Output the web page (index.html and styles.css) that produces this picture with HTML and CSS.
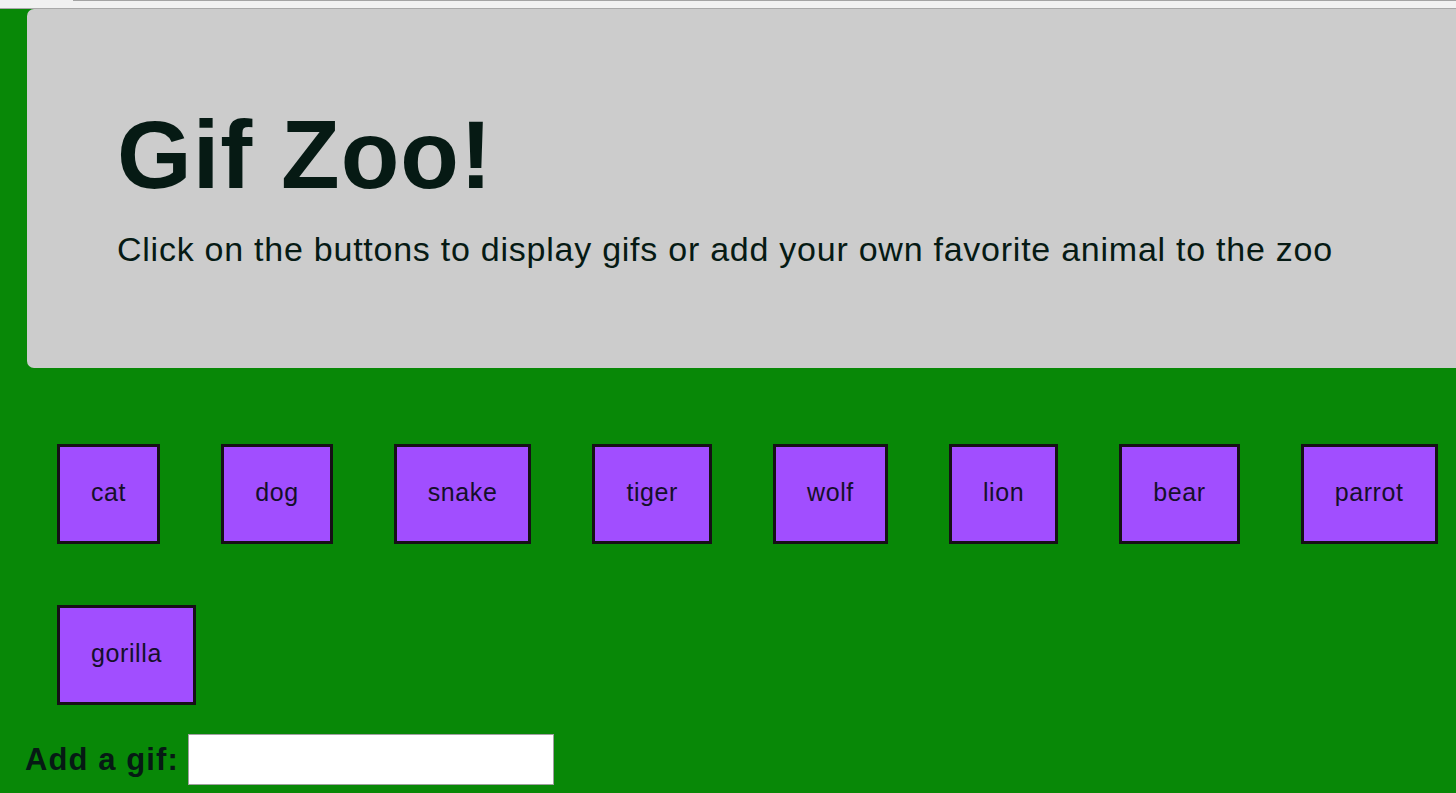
FILE: index.html
```html
<!DOCTYPE html>
<html lang="en">
<head>
<meta charset="utf-8">
<title>Gif Zoo!</title>
<link rel="stylesheet" href="styles.css">
</head>
<body>
<div class="scrollbar"><div class="thumb"></div></div>
<header class="jumbotron">
  <h1 class="title">Gif Zoo!</h1>
  <p class="lead">Click on the buttons to display gifs or add your own favorite animal to the zoo</p>
</header>
<section class="buttons">
  <button class="animal">cat</button>
  <button class="animal">dog</button>
  <button class="animal">snake</button>
  <button class="animal">tiger</button>
  <button class="animal">wolf</button>
  <button class="animal">lion</button>
  <button class="animal">bear</button>
  <button class="animal">parrot</button>
  <button class="animal">gorilla</button>
</section>
<form class="add-form">
  <label class="add-label" for="animal-input">Add a gif:</label>
  <input class="add-input" id="animal-input" type="text">
</form>
</body>
</html>
```
FILE: styles.css
```css
html, body {
  margin: 0;
  padding: 0;
}
body {
  background: #088807;
  font-family: "Liberation Sans", Arial, sans-serif;
  color: #061a14;
  overflow: hidden;
  height: 793px;
}
.scrollbar {
  height: 8px;
  background: #f1f1f1;
  border-bottom: 1px solid #a9a9a9;
  display: flex;
  justify-content: flex-end;
}
.thumb {
  width: calc(100% - 73px);
  height: 1px;
  background: #a3a3a3;
}
.jumbotron {
  margin-left: 27px;
  height: 359px;
  box-sizing: border-box;
  padding: 98px 0 0 90px;
  background: #cccccc;
  border-radius: 7px 0 0 7px;
}
.title {
  margin: 0;
  font-size: 96px;
  line-height: 1;
  font-weight: 700;
  letter-spacing: 1px;
}
.lead {
  margin: 29px 0 0;
  font-size: 34px;
  line-height: 1;
  font-weight: 400;
  letter-spacing: 0.75px;
  white-space: nowrap;
}
.buttons {
  display: flex;
  flex-wrap: wrap;
  gap: 61px;
  margin: 76px 0 0 57px;
  width: 1399px;
}
.animal {
  height: 100px;
  padding: 0 31px 4px;
  background: #a14eff;
  border: 3px solid #161016;
  border-radius: 0;
  font-family: "Liberation Sans", Arial, sans-serif;
  font-size: 25px;
  letter-spacing: 0.6px;
  color: #15102a;
}
.add-form {
  display: flex;
  align-items: center;
  gap: 9px;
  margin: 29px 0 0 25px;
}
.add-label {
  font-size: 31px;
  font-weight: 700;
  letter-spacing: 1.1px;
  color: #061a14;
}
.add-input {
  width: 366px;
  height: 51px;
  box-sizing: border-box;
  border: 1px solid #a0a0a0;
  background: #ffffff;
  margin: 0;
  padding: 0 4px;
}
```
